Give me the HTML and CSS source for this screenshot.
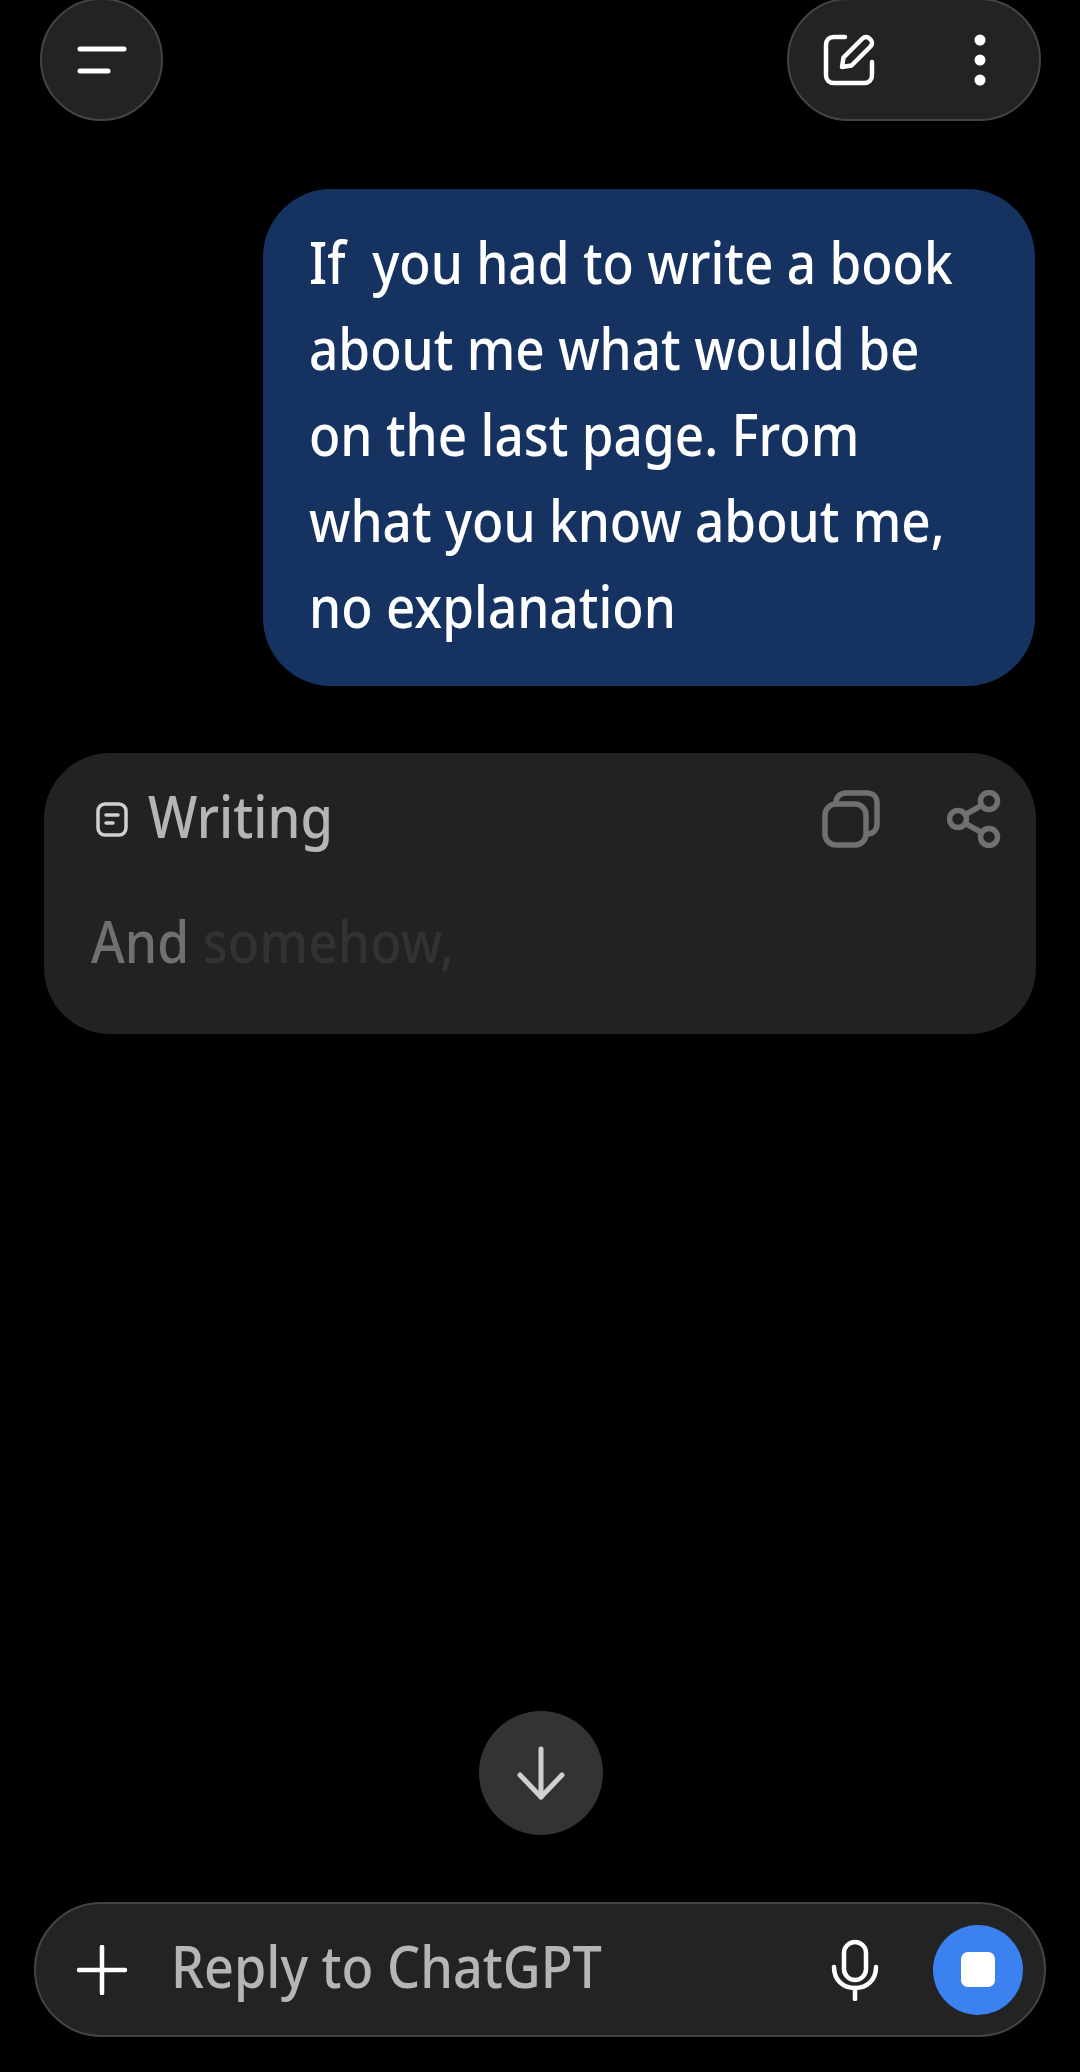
FILE: index.html
```html
<!DOCTYPE html>
<html lang="en">
<head>
    <meta charset="UTF-8">
    <title>ChatGPT</title>
    <link rel="stylesheet" href="styles.css">
</head>
<body>
    <!-- Top bar -->
    <header class="topbar">
        <div class="round-btn">
            <svg width="50" height="28" viewBox="0 0 50 28" fill="none" stroke="#fff" stroke-width="5" stroke-linecap="round">
                <path d="M3 3H47"/>
                <path d="M3 25H31"/>
            </svg>
        </div>
        <div class="pill-btn">
            <svg width="52" height="52" viewBox="0 0 52 52" fill="none" stroke="#fff" stroke-width="4.5" stroke-linecap="round" stroke-linejoin="round">
                <path d="M22 3H11C6 3 3 6 3 11V41C3 46 6 49 11 49H41C46 49 49 46 49 41V28"/>
                <path d="M19 33L20.5 23.5L39.5 4.5C41.5 2.5 44.5 2.5 46.5 4.5L47.5 5.5C49.5 7.5 49.5 10.5 47.5 12.5L28.5 31.5Z"/>
            </svg>
            <svg width="12" height="52" viewBox="0 0 12 52" fill="#fff">
                <circle cx="6" cy="6" r="5.5"/>
                <circle cx="6" cy="26" r="5.5"/>
                <circle cx="6" cy="46" r="5.5"/>
            </svg>
        </div>
    </header>

    <!-- Conversation -->
    <section class="user-bubble">
        <div class="bubble-text">If &nbsp;you had to write a book<br>about me what would be<br>on the last page. From<br>what you know about me,<br>no explanation</div>
    </section>

    <section class="writing-card">
        <div class="writing-head">
            <svg class="doc-icon" width="32" height="35" viewBox="0 0 32 35" fill="none" stroke="#d0d0d0" stroke-width="3.5" stroke-linecap="round">
                <rect x="2" y="2" width="28" height="31" rx="7"/>
                <path d="M10 13H22"/>
                <path d="M10 21H17"/>
            </svg>
            <span class="writing-label">Writing</span>
            <div class="writing-actions">
                <svg width="58" height="58" viewBox="0 0 58 58" fill="none" stroke="#707070" stroke-width="5.5">
                    <rect x="3" y="14" width="41" height="41" rx="11"/>
                    <path d="M14 14V13C14 7 18 3 24 3H45C51 3 55 7 55 13V34C55 40 51 44 45 44H44"/>
                </svg>
                <svg width="54" height="58" viewBox="0 0 54 58" fill="none" stroke="#707070" stroke-width="5.5">
                    <circle cx="11" cy="29" r="8.5"/>
                    <circle cx="42" cy="11" r="8.5"/>
                    <circle cx="42" cy="47" r="8.5"/>
                    <path d="M18.5 24.5L34.5 15.5"/>
                    <path d="M18.5 33.5L34.5 42.5"/>
                </svg>
            </div>
        </div>
        <p class="writing-text"><span class="fade-1">And</span> <span class="fade-2">somehow,</span></p>
    </section>

    <!-- Scroll down -->
    <div class="scroll-down">
        <svg width="48" height="54" viewBox="0 0 48 54" fill="none" stroke="#d0d0d0" stroke-width="5" stroke-linecap="round" stroke-linejoin="round">
            <path d="M24 3V51"/>
            <path d="M3 29L24 51L45 29"/>
        </svg>
    </div>

    <!-- Input bar -->
    <footer class="composer">
        <svg class="plus-icon" width="50" height="50" viewBox="0 0 50 50" fill="none" stroke="#fff" stroke-width="4.5" stroke-linecap="round">
            <path d="M25 2V48"/>
            <path d="M2 25H48"/>
        </svg>
        <span class="placeholder">Reply to ChatGPT</span>
        <svg class="mic-icon" width="48" height="62" viewBox="0 0 48 62" fill="none" stroke="#fff" stroke-width="4.5" stroke-linecap="round">
            <rect x="13" y="3" width="22" height="38" rx="11"/>
            <path d="M3 28C3 41 12 49 24 49C36 49 45 41 45 28"/>
            <path d="M24 49V60"/>
        </svg>
        <div class="stop-btn"><div class="stop-square"></div></div>
    </footer>
</body>
</html>
```

FILE: styles.css
```css
* {
    box-sizing: border-box;
}

body {
    font-family: 'Noto Sans', sans-serif;
    font-weight: 500;
    display: flex;
    flex-direction: column;
    width: 1080px;
    height: 2072px;
    margin: 0;
    overflow: hidden;
    background-color: #000;
}

/* Top bar */
.topbar {
    display: flex;
    justify-content: space-between;
    margin: -2px 39px 0 40px;
}

.round-btn {
    display: flex;
    align-items: center;
    justify-content: center;
    width: 123px;
    height: 123px;
    background: #232323;
    border: 2px solid #444;
    border-radius: 50%;
}

.pill-btn {
    display: flex;
    align-items: center;
    gap: 99px;
    width: 254px;
    height: 123px;
    padding-left: 34px;
    background: #232323;
    border: 2px solid #444;
    border-radius: 62px;
}

/* User message */
.user-bubble {
    align-self: flex-end;
    width: 772px;
    height: 497px;
    margin: 68px 45px 0 0;
    padding: 30px 0 0 46px;
    background: #153260;
    border-radius: 68px;
    overflow: hidden;
}

/* the reference font is narrower than anything installed */
.bubble-text {
    color: #fff;
    font-size: 58px;
    line-height: 86px;
    white-space: nowrap;
    transform: scaleX(0.885);
    transform-origin: left;
}

/* Writing card */
.writing-card {
    width: 992px;
    height: 281px;
    margin: 67px 0 0 44px;
    padding: 37px 35px 0 47px;
    background: #222;
    border-radius: 66px;
}

.writing-head {
    display: flex;
    align-items: center;
    height: 58px;
}

.doc-icon {
    margin: 0 20px 0 5px;
}

.writing-label {
    color: #b5b5b5;
    font-size: 58px;
    line-height: 58px;
    margin-top: -6px;
    transform: scaleX(0.905);
    transform-origin: left;
}

.writing-actions {
    display: flex;
    gap: 67px;
    margin-left: auto;
}

.writing-text {
    margin: 50px 0 0 0;
    font-size: 58px;
    line-height: 86px;
    white-space: nowrap;
    transform: scaleX(0.89);
    transform-origin: left;
}

.fade-1 {
    color: #707070;
}

.fade-2 {
    color: #323232;
}

/* Scroll button */
.scroll-down {
    display: flex;
    align-items: center;
    justify-content: center;
    align-self: center;
    width: 124px;
    height: 124px;
    margin: 677px 0 0 2px;
    background: #333;
    border-radius: 50%;
}

/* Composer */
.composer {
    display: flex;
    align-items: center;
    width: 1012px;
    height: 135px;
    margin: 67px 0 0 34px;
    padding: 0 21px 0 41px;
    background: #232323;
    border: 2px solid #444;
    border-radius: 68px;
}

.plus-icon {
    flex-shrink: 0;
}

.placeholder {
    margin: -8px 0 0 44px;
    color: #b5b5b5;
    font-size: 58px;
    white-space: nowrap;
    transform: scaleX(0.9);
    transform-origin: left;
}

.mic-icon {
    flex-shrink: 0;
    margin-left: auto;
}

.stop-btn {
    display: flex;
    align-items: center;
    justify-content: center;
    flex-shrink: 0;
    width: 90px;
    height: 90px;
    margin-left: 54px;
    background: #3b82f0;
    border-radius: 50%;
}

.stop-square {
    width: 34px;
    height: 35px;
    background: #fff;
    border-radius: 7px;
}
```
